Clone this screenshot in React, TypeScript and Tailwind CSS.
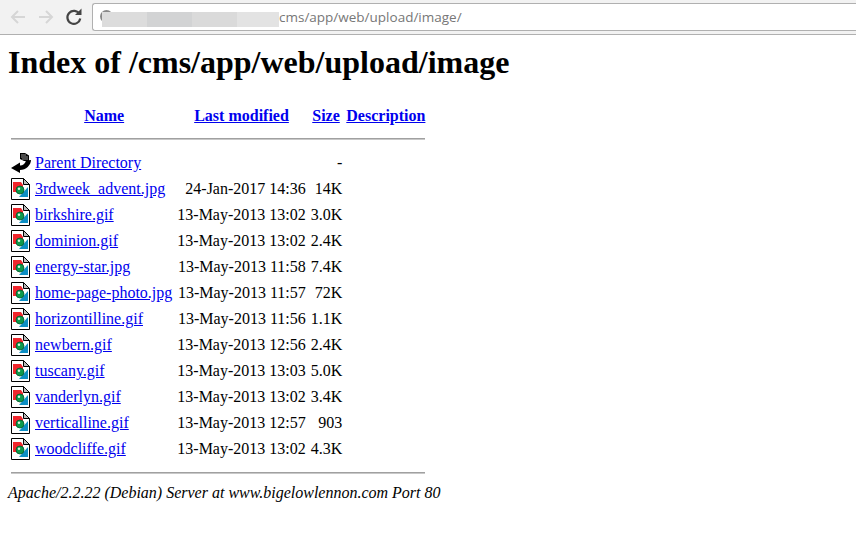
const rows = [
  ["3rdweek_advent.jpg", "24-Jan-2017 14:36", "14K"],
  ["birkshire.gif", "13-May-2013 13:02", "3.0K"],
  ["dominion.gif", "13-May-2013 13:02", "2.4K"],
  ["energy-star.jpg", "13-May-2013 11:58", "7.4K"],
  ["home-page-photo.jpg", "13-May-2013 11:57", "72K"],
  ["horizontilline.gif", "13-May-2013 11:56", "1.1K"],
  ["newbern.gif", "13-May-2013 12:56", "2.4K"],
  ["tuscany.gif", "13-May-2013 13:03", "5.0K"],
  ["vanderlyn.gif", "13-May-2013 13:02", "3.4K"],
  ["verticalline.gif", "13-May-2013 12:57", "903"],
  ["woodcliffe.gif", "13-May-2013 13:02", "4.3K"],
];

function ImageIcon() {
  return (
    <svg width="20" height="22" viewBox="0 0 20 22" className="block">
      <path d="M.5 .5H12.500L18.500 6.500V21.500H.5Z" fill="#fff" stroke="#000" />
      <path d="M12.500 .5V6.500H18.500Z" fill="#bbb" stroke="#000" />
      <path d="M2 4H10L12 7V10L8 14H2Z" fill="#f0262c" />
      <path d="M17 9V19H8Z" fill="#0d8fc4" />
      <circle cx="9" cy="12" r="4" fill="#0d9a4c" stroke="#04592c" strokeWidth=".8" />
      <circle cx="8" cy="10.800" r="1.200" fill="#d8f5df" />
    </svg>
  );
}

function BackIcon() {
  return (
    <svg width="20" height="22" viewBox="0 0 20 22" className="block">
      <path d="M0 16L9 10.500V13.500C12 13.500 14 12 15 8.500L20 8C20 13 15 18 9 18V21Z" fill="#000" />
      <path d="M9 1H14L18 3.500V9H13L9 7Z" fill="#000" />
      <path d="M10 3H15M10 5H17M11 7H17" stroke="#fff" strokeWidth=".6" />
    </svg>
  );
}

const mask = ["w-[45px] bg-[#dcdcdc]", "w-[45px] bg-[#d2d3d4]", "w-[45px] bg-[#dadada]", "w-[42px] bg-[#e3e3e3]"];

export default function App() {
  return (
    <div className="w-[856px] h-[556px] overflow-hidden bg-white font-['Liberation_Serif',serif] text-[16px] leading-[18px] text-black">
      <div className="h-[35px] bg-[#f2f2f2] border-b border-[#b0b0b0] flex items-center">
        <svg width="92" height="30" viewBox="0 0 92 30" className="shrink-0" fill="none">
          <path d="M25 15H12.500M18 9L12 15L18 21" stroke="#d6d6d6" strokeWidth="2" />
          <path d="M39 15H51.500M46 9L52 15L46 21" stroke="#d6d6d6" strokeWidth="2" />
          <path d="M79.500 12A6.500 6.500 0 1 0 80.300 16.500" stroke="#444" strokeWidth="2.200" />
          <path d="M75 13H81.500V6.500Z" fill="#444" />
        </svg>
        <div className="relative h-[28px] flex-1 bg-white border border-[#b0b0b0] border-r-0 rounded-l-[3px] flex items-center font-['Open_Sans',sans-serif] text-[13.500px] text-[#777] pl-[186px]">
          cms/app/web/upload/image/
          <span className="absolute left-[7px] top-[6px] w-[13px] h-[13px] rounded-full border-2 border-[#888] border-r-transparent border-b-transparent" />
          <div className="absolute left-[9px] top-[8px] h-[15px] flex">
            {mask.map((m) => <span key={m} className={m + " h-[15px] block"} />)}
          </div>
        </div>
      </div>

      <h1 className="font-bold text-[32px] leading-[37px] ml-[8px] mt-[9px]">Index of /cms/app/web/upload/image</h1>

      <table className="ml-[8px] mt-[23px] border-separate border-spacing-[2px]">
        <thead>
          <tr className="h-[20px]">
            <th className="p-[1px]"></th>
            <th className="p-[1px]"><a className="text-[#0000ee] underline">Name</a></th>
            <th className="p-[1px]"><a className="text-[#0000ee] underline">Last modified</a></th>
            <th className="p-[1px]"><a className="text-[#0000ee] underline">Size</a></th>
            <th className="p-[1px]"><a className="text-[#0000ee] underline">Description</a></th>
          </tr>
          <tr><th colSpan={5} className="p-[1px]"><div className="h-[2px] mt-[9px] mb-[8px] bg-[#a0a0a0] border-b border-[#c8c8c8]" /></th></tr>
        </thead>
        <tbody>
          <tr>
            <td className="p-[1px] align-top"><BackIcon /></td>
            <td className="p-[1px] pr-[2px]"><a className="text-[#0000ee] underline">Parent Directory</a></td>
            <td className="p-[1px]"></td>
            <td className="p-[1px] pl-[2px] text-right">- </td>
            <td className="p-[1px]"></td>
          </tr>
          {rows.map((r) => (
            <tr key={r[0]}>
              <td className="p-[1px] align-top"><ImageIcon /></td>
              <td className="p-[1px] pr-[2px]"><a className="text-[#0000ee] underline">{r[0]}</a></td>
              <td className="p-[1px] text-right">{r[1]}</td>
              <td className="p-[1px] pl-[2px] text-right">{r[2]}</td>
              <td className="p-[1px]"></td>
            </tr>
          ))}
          <tr><th colSpan={5} className="p-[1px]"><div className="h-[2px] mt-[8px] mb-[7px] bg-[#a0a0a0] border-b border-[#c8c8c8]" /></th></tr>
        </tbody>
      </table>
      <address className="ml-[8px] italic">Apache/2.2.22 (Debian) Server at www.bigelowlennon.com Port 80</address>
    </div>
  );
}
